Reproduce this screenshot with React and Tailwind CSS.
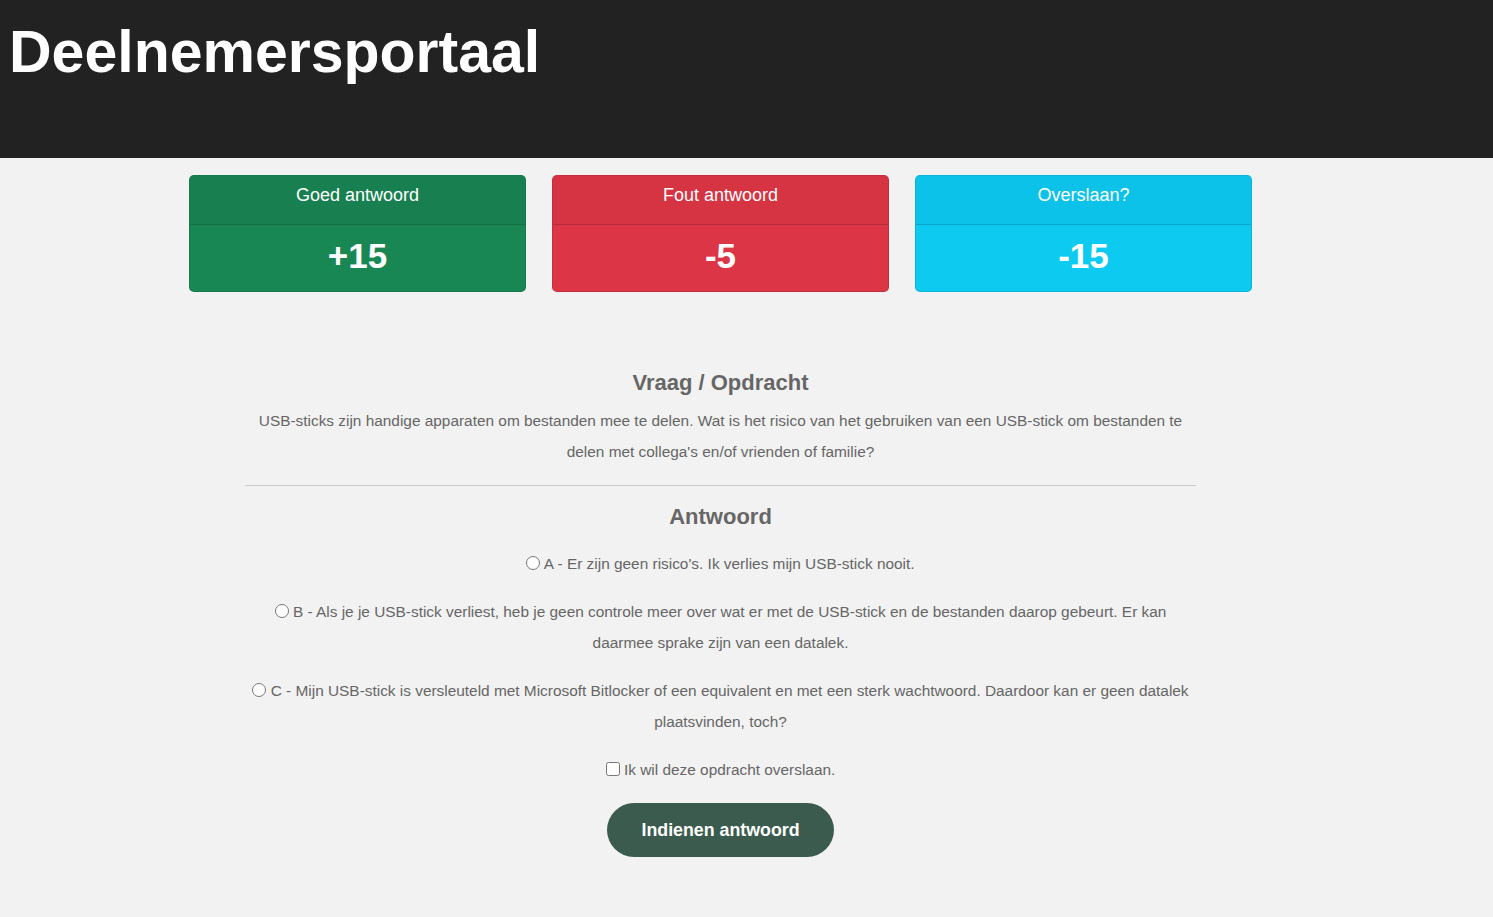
import { useState } from 'react';

const font = { fontFamily: '"Liberation Sans", Arial, sans-serif' };

const cards = [
  ['Goed antwoord', '+15', 'bg-[#198754]', 'bg-[#188050]'],
  ['Fout antwoord', '-5', 'bg-[#dc3545]', 'bg-[#d63343]'],
  ['Overslaan?', '-15', 'bg-[#0dcaf0]', 'bg-[#0dc2e8]'],
];

const options = [
  ['A', 'A - Er zijn geen risico\'s. Ik verlies mijn USB-stick nooit.'],
  ['B', 'B - Als je je USB-stick verliest, heb je geen controle meer over wat er met de USB-stick en de bestanden daarop gebeurt. Er kan daarmee sprake zijn van een datalek.'],
  ['C', 'C - Mijn USB-stick is versleuteld met Microsoft Bitlocker of een equivalent en met een sterk wachtwoord. Daardoor kan er geen datalek plaatsvinden, toch?'],
];

export default function App() {
  const [answer, setAnswer] = useState('');
  const [skip, setSkip] = useState(false);

  return (
    <div className="min-h-screen bg-[#f2f2f2]" style={font}>
      <header className="h-[158px] bg-[#222222] pl-[9px] pt-[16px]">
        <h1 className="text-[59px] leading-[72px] font-bold text-white">Deelnemersportaal</h1>
      </header>

      <div className="pr-[52px]">
        <div className="flex justify-center gap-[26px] mt-[17px]">
          {cards.map(([title, value, body, head]) => (
            <div key={title} className={`w-[337px] rounded-[5px] border border-black/10 overflow-hidden text-white text-center ${body}`}>
              <div className={`h-[49px] pt-[6px] text-[18px] leading-[27px] border-b border-black/15 ${head}`}>
                {title}
              </div>
              <div className="h-[66px] pt-[10px] text-[35px] leading-[42px] font-bold">
                {value}
              </div>
            </div>
          ))}
        </div>

        <form onSubmit={e => e.preventDefault()} className="w-[951px] mx-auto mt-[77px] text-center text-[#666666]">
          <h2 className="text-[22px] leading-[28px] font-bold mb-[8px]">Vraag / Opdracht</h2>
          <p className="text-[15.4px] leading-[31px] px-[6px]">
            USB-sticks zijn handige apparaten om bestanden mee te delen. Wat is het risico van het gebruiken van een USB-stick om bestanden te delen met collega's en/of vrienden of familie?
          </p>
          <hr className="border-0 border-t border-[#cccccc] mt-[18px] mb-[17px]" />
          <h2 className="text-[22px] leading-[28px] font-bold mb-[17px]">Antwoord</h2>
          {options.map(([k, text]) => (
            <p key={k} className="text-[15.4px] leading-[31px] mb-[17px] px-[4px]">
              <input type="radio" name="answer" className="w-[14px] h-[14px] align-[-1px]" checked={answer === k} onChange={() => setAnswer(k)} /> {text}
            </p>
          ))}
          <p className="text-[15.4px] leading-[31px] mb-[18px]">
            <input type="checkbox" className="w-[14px] h-[14px] align-[-1px]" checked={skip} onChange={e => setSkip(e.target.checked)} /> Ik wil deze opdracht overslaan.
          </p>
          <button type="submit" className="h-[54px] px-[34px] rounded-full bg-[#3a5b4d] text-white text-[17.8px] font-bold">
            Indienen antwoord
          </button>
        </form>
      </div>
    </div>
  );
}
